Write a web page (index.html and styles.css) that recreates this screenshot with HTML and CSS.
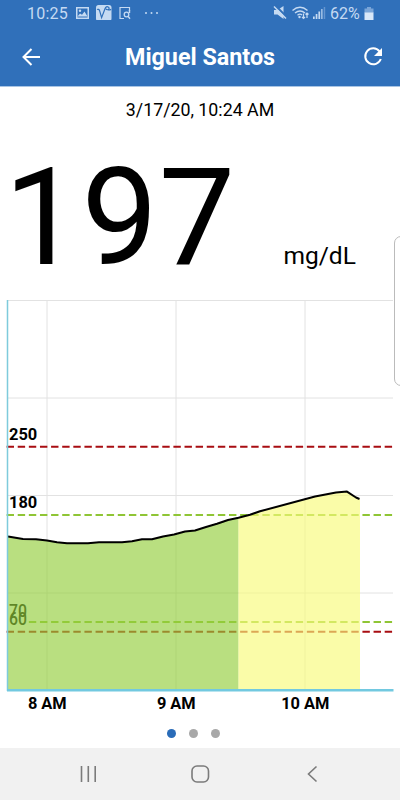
FILE: index.html
```html
<!DOCTYPE html>
<html lang="en">
<head>
  <meta charset="UTF-8">
  <meta name="viewport" content="width=device-width, initial-scale=1.0">
  <title>Miguel Santos</title>
  <link rel="stylesheet" href="styles.css">
</head>
<body>
  <header class="top">
    <div class="status">
      <span class="time">10:25</span>
      <svg class="status-left" width="86" height="20" viewBox="0 0 86 20">
        <path fill="#c5daf2" fill-rule="evenodd" d="M1 7h13v12H1zM2.500 8.500v9h10v-9z"/>
        <path fill="#c5daf2" d="M2.500 16.500l2.500-3 2 1.200 2.500-3.200 3 5z"/>
        <circle cx="5" cy="10.700" r="1.200" fill="#c5daf2"/>
        <rect x="21" y="5" width="15.500" height="16" rx="2.500" fill="#c5daf2"/>
        <path fill="none" stroke="#3070ba" stroke-width="1.200" d="M22 9.500q1.800-.8 2.600 1.200l2 7 3.400-9q1.200-3 3.500-1.500 1.500 1.700-.5 2.500-1.500.3-2-1M33 9.700q1.500.8 3-.5"/>
        <path fill="none" stroke="#c5daf2" stroke-width="1.200" d="M49 18.500h-4V7.500h9.500v3.500"/>
        <circle cx="51.500" cy="14.500" r="2.300" fill="none" stroke="#c5daf2" stroke-width="1.300"/>
        <path stroke="#c5daf2" stroke-width="1.400" d="M53 16.300l2 2.500M54.500 10v3"/>
        <g fill="#c5daf2"><circle cx="71" cy="13" r="1"/><circle cx="76.500" cy="13" r="1"/><circle cx="82" cy="13" r="1"/></g>
      </svg>
      <svg class="status-right" width="54" height="20" viewBox="0 0 54 20">
        <path fill="#c5daf2" d="M1 10h3.500L10.500 6v13l-6-4.500H1z"/>
        <path stroke="#3070ba" stroke-width="2.200" d="M2 5.300l12 12"/>
        <path stroke="#c5daf2" stroke-width="1.500" d="M1 6.500l12 12"/>
        <g fill="none" stroke="#c5daf2" stroke-width="1.400">
          <path d="M19.500 10.500q7.500-6.500 15 0M22 13q5-4.200 10 0M24.500 15.200q2.500-2 4.500-.2"/>
          <path stroke-width="1.200" d="M30.500 13.500v5M29 17l1.500 1.500 1.500-1.500M34 18v-5M32.500 14.500L34 13l1.500 1.500"/>
        </g>
        <circle cx="26.500" cy="17" r="1.200" fill="#c5daf2"/>
        <path fill="#c5daf2" d="M40 16.500h1.700V19H40zM42.700 14h1.700v5h-1.700zM45.400 11.500h1.700V19h-1.700z"/>
        <path fill="#a5c4e8" d="M48.100 9h1.500v10h-1.500z"/>
        <path fill="#6495cf" d="M50.700 7h1.500v12h-1.500z"/>
      </svg>
      <span class="battery-level">62%</span>
      <svg class="battery" width="10" height="14" viewBox="0 0 10 14">
        <path fill="#7aa5d8" d="M3 0h4v1.500h2.500V6h-9V1.500H3z"/>
        <path fill="#d8e7f8" d="M.5 5.500h9V13h-9z"/>
      </svg>
    </div>
    <div class="bar">
      <svg width="20" height="18" viewBox="0 0 20 18" fill="none" stroke="#fff" stroke-width="2">
        <path d="M19 9H3M10.500 1L2.500 9l8 8"/>
      </svg>
      <h1>Miguel Santos</h1>
      <svg width="20" height="20" viewBox="0 0 20 20">
        <path fill="none" stroke="#fff" stroke-width="2" d="M16.500 4.300A8 8 0 1 0 17.800 12"/>
        <path fill="#fff" d="M19 1v8h-8z"/>
      </svg>
    </div>
  </header>

  <main>
    <p class="date">3/17/20, 10:24 AM</p>
    <div class="reading">
      <span class="value">197</span>
      <span class="unit">mg/dL</span>
    </div>

    <svg class="chart" width="400" height="424" viewBox="0 296 400 424">
      <!-- grid -->
      <path class="grid" d="M8 300.500h385M8 398h385M8 495.500h385M8 593h385M47 300v390M176 300v390M305 300v390"/>
      <!-- thresholds -->
      <path class="limit red" d="M6.600 446.700H393"/>
      <path class="limit green" d="M6.600 515H393"/>
      <path class="limit green" d="M28.840 622H393"/>
      <path class="limit red" d="M6.600 631.800H393"/>
      <g class="label">
        <text x="9" y="440">250</text>
        <text x="9" y="508">180</text>
      </g>
      <g class="label low">
        <text x="9" y="616.500" textLength="18" lengthAdjust="spacingAndGlyphs">70</text>
        <text x="9" y="625" textLength="18" lengthAdjust="spacingAndGlyphs">60</text>
      </g>
      <!-- areas under the curve -->
      <path fill="#93ce3c" fill-opacity=".65" d="M8 690V536.500L23 539L36 539.300L47 540.600L57 542.300L67 543.300H88L99 542.300H122L132 541.300L142 539.300H152L163 536.500L174 534.500L185 531.500L195 530.500L206 527L217 523.800L228 520L238.500 517.800V690z"/>
      <path fill="#f8fb79" fill-opacity=".65" d="M238.500 690V517.800L250 514.700L260 511.300L315 496.500L336 492.600L347 491.600L356 497.500L360 499V690z"/>
      <path class="curve" d="M8 536.500L23 539L36 539.300L47 540.600L57 542.300L67 543.300H88L99 542.300H122L132 541.300L142 539.300H152L163 536.500L174 534.500L185 531.500L195 530.500L206 527L217 523.800L228 520L238.500 517.800L250 514.700L260 511.300L315 496.500L336 492.600L347 491.600L356 497.500L359.500 499"/>
      <path class="axis-y" d="M7.500 300v391"/>
      <path class="axis-x" d="M7 690.200h386.500"/>
      <g class="label hours">
        <text x="47.300" y="708.500">8 AM</text>
        <text x="176.300" y="708.500">9 AM</text>
        <text x="305.300" y="708.500">10 AM</text>
      </g>
    </svg>

    <div class="dots">
      <span class="dot active"></span>
      <span class="dot"></span>
      <span class="dot"></span>
    </div>
    <div class="edge-handle"></div>
  </main>

  <nav class="nav">
    <svg width="18" height="18" viewBox="0 0 18 18"><path d="M2.500 1v16M9.300 1v16M16.200 1v16"/></svg>
    <svg width="20" height="18" viewBox="0 0 20 18"><rect x="2" y="1" width="16.500" height="16" rx="5"/></svg>
    <svg width="18" height="18" viewBox="0 0 18 18"><path d="M13.500 1.500L5.500 9l8 7.500"/></svg>
  </nav>
</body>
</html>
```

FILE: styles.css
```css
* {
  box-sizing: border-box;
}

body {
  margin: 0;
  height: 800px;
  overflow: hidden;
  display: flex;
  flex-direction: column;
  font-family: Roboto, sans-serif;
  background: #fff;
  color: #000;
}

svg {
  display: block;
  flex: none;
}

.top {
  height: 87px;
  background: #3070ba;
  border-bottom: 1px solid #a9c5e4;
  color: #fff;
}

.status {
  height: 28px;
  padding-left: 27px;
  display: flex;
  align-items: flex-start;
  color: #c5daf2;
  font-size: 16px;
  line-height: 28px;
}

.time {
  width: 48px;
  letter-spacing: 0.2px;
}

.status-right {
  margin-left: 112px;
}

.battery-level {
  width: 33px;
  margin-left: 3px;
}

.battery {
  margin: 7px 0 0 1px;
}

.bar {
  height: 58px;
  padding: 0 17px 0 21px;
  display: flex;
  align-items: center;
  justify-content: space-between;
}

h1 {
  margin: 0 4px 0 0;
  font-size: 23.3px;
  font-weight: bold;
}

main {
  position: relative;
  height: 661px;
}

.date {
  margin: 0;
  padding-top: 12px;
  text-align: center;
  font-size: 17.8px;
  line-height: 22px;
}

.reading {
  height: 175px;
  padding: 18px 0 0 4px;
  display: flex;
  align-items: baseline;
}

.value {
  width: 279.5px;
  font-size: 136px;
  line-height: 158px;
  letter-spacing: 1px;
}

.unit {
  font-size: 24.5px;
}

.grid {
  fill: none;
  stroke: #e2e2e2;
}

.limit {
  fill: none;
  stroke-width: 2;
  stroke-dasharray: 7.4 3.720;
}

.red {
  stroke: #a80d12;
}

.green {
  stroke: #8fc535;
}

.label {
  font-size: 16.4px;
  font-weight: bold;
}

.low {
  font-size: 17.5px;
  font-weight: 500;
}

.hours {
  text-anchor: middle;
}

.curve {
  fill: none;
  stroke: #000;
  stroke-width: 2;
  stroke-linejoin: round;
}

.axis-y {
  stroke: #7ecbdc;
  stroke-width: 1.5;
}

.axis-x {
  stroke: #72c9e0;
  stroke-width: 2.4;
}

.dots {
  padding: 9px 0 0 166.5px;
  display: flex;
  gap: 13.2px;
}

.dot {
  width: 9px;
  height: 9px;
  border-radius: 50%;
  background: #a8a8a8;
}

.active {
  background: #2a6cb8;
}

/* edge panel handle lies over the page */
.edge-handle {
  position: absolute;
  top: 149px;
  right: -8px;
  width: 14px;
  height: 150px;
  border: 1px solid #bbb;
  border-radius: 7px;
  background: #fff;
}

.nav {
  height: 52px;
  padding: 0 79px;
  display: flex;
  align-items: center;
  justify-content: space-between;
  background: #f1f1f1;
}

.nav svg {
  fill: none;
  stroke: #7b7b7b;
  stroke-width: 1.6;
}
```
